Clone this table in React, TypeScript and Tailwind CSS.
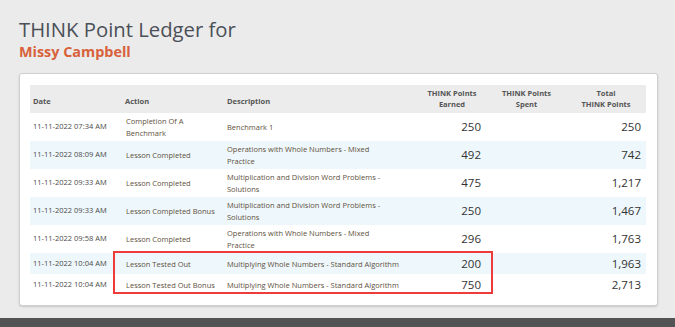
import React from "react";

const rows = [
  { date: "11-11-2022 07:34 AM", action: "Completion Of A Benchmark", desc: "Benchmark 1", earned: "250", total: "250" },
  { date: "11-11-2022 08:09 AM", action: "Lesson Completed", desc: "Operations with Whole Numbers - Mixed Practice", earned: "492", total: "742" },
  { date: "11-11-2022 09:33 AM", action: "Lesson Completed", desc: "Multiplication and Division Word Problems - Solutions", earned: "475", total: "1,217" },
  { date: "11-11-2022 09:33 AM", action: "Lesson Completed Bonus", desc: "Multiplication and Division Word Problems - Solutions", earned: "250", total: "1,467" },
  { date: "11-11-2022 09:58 AM", action: "Lesson Completed", desc: "Operations with Whole Numbers - Mixed Practice", earned: "296", total: "1,763" },
  { date: "11-11-2022 10:04 AM", action: "Lesson Tested Out", desc: "Multiplying Whole Numbers - Standard Algorithm", earned: "200", total: "1,963", short: true },
  { date: "11-11-2022 10:04 AM", action: "Lesson Tested Out Bonus", desc: "Multiplying Whole Numbers - Standard Algorithm", earned: "750", total: "2,713", short: true },
];

export default function App() {
  return (
    <div className="w-[675px] h-[327px] bg-[#ebebeb] flex flex-col font-['Open_Sans',sans-serif] overflow-hidden">
      <div className="flex-1 px-[19px] pt-[16px]">
        <h1 className="text-[20.3px] leading-[26px] text-[#4b5058]">THINK Point Ledger for</h1>
        <h2 className="mt-[1px] text-[14.4px] leading-[18px] font-bold text-[#d8613c]">Missy Campbell</h2>

        <div className="mt-[12px] w-[639px] h-[233px] bg-white border border-[#cfcfcf] rounded-[3px] shadow-[0_1px_2px_rgba(0,0,0,0.15)] pt-[11px] px-[10px]">
          <div className="relative">
            <table className="w-[616px] border-collapse table-fixed">
              <colgroup>
                <col className="w-[92px]" />
                <col className="w-[101px]" />
                <col className="w-[192px]" />
                <col className="w-[72px]" />
                <col className="w-[79px]" />
                <col className="w-[80px]" />
              </colgroup>
              <thead>
                <tr className="bg-[#ececec] h-[28px] text-[7.5px] leading-[11px] font-semibold text-[#555]">
                  <th className="text-left pl-[3px] align-bottom pb-[6px]">Date</th>
                  <th className="text-left pl-[3px] align-bottom pb-[6px]">Action</th>
                  <th className="text-left pl-[4px] align-bottom pb-[6px]">Description</th>
                  <th className="text-center align-middle pl-[2px] whitespace-nowrap">THINK Points<br />Earned</th>
                  <th className="text-center align-middle">THINK Points<br />Spent</th>
                  <th className="text-center align-middle">Total<br />THINK Points</th>
                </tr>
              </thead>
              <tbody>
                {rows.map((r, i) => (
                  <tr key={i} className={`${r.short ? "h-[21px]" : "h-[28px]"} ${i % 2 === 1 ? "bg-[#eef7fb]" : "bg-white"}`}>
                    <td className="pl-[3px] text-[7.5px] text-[#4a4a4a] align-middle">{r.date}</td>
                    <td className="pl-[4px] pr-[4px] text-[7.5px] leading-[12px] text-[#5e5140] align-middle">{r.action}</td>
                    <td className="pl-[4px] pr-[2px] text-[7.5px] leading-[12px] text-[#5e5140] align-middle">
                      <div className={r.short ? "whitespace-nowrap" : "max-w-[160px]"}>{r.desc}</div>
                    </td>
                    <td className="text-right pr-[6px] text-[11.5px] text-[#333] align-middle">{r.earned}</td>
                    <td></td>
                    <td className="text-right pr-[5px] text-[11.5px] text-[#333] align-middle">{r.total}</td>
                  </tr>
                ))}
              </tbody>
            </table>
            <div className="absolute left-[83px] top-[166px] w-[380px] h-[43px] border-[2px] border-[#ee3b3b] pointer-events-none" />
          </div>
        </div>
      </div>
      <div className="h-[9px] bg-[#515354]" />
    </div>
  );
}
